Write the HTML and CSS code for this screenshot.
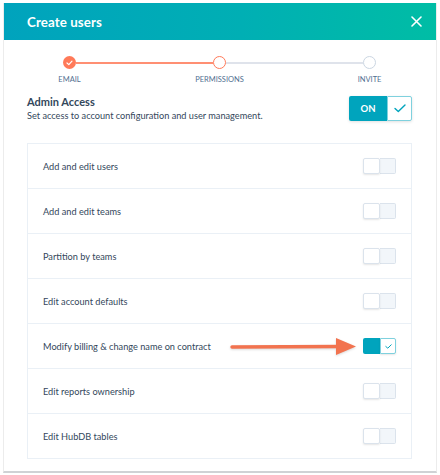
FILE: index.html
```html
<!DOCTYPE html>
<html>
<head>
<meta charset="utf-8">
<link rel="stylesheet" href="styles.css">
</head>
<body>
<div class="modal">
  <div class="header">
    <span class="title">Create users</span>
    <svg class="close" width="11" height="11" viewBox="0 0 11 11"><path d="M1 1 L10 10 M10 1 L1 10" stroke="#fff" stroke-width="1.6" stroke-linecap="round"/></svg>
  </div>
  <div class="content">
    <div class="steps">
      <div class="step">
        <span class="dot done"><svg width="7" height="6" viewBox="0 0 7 6"><path d="M1 3 L2.8 4.6 L6 1.2" fill="none" stroke="#fff" stroke-width="1.2" stroke-linecap="round" stroke-linejoin="round"/></svg></span>
        <span class="label">EMAIL</span>
      </div>
      <div class="line active"></div>
      <div class="step">
        <span class="dot current"></span>
        <span class="label">PERMISSIONS</span>
      </div>
      <div class="line"></div>
      <div class="step">
        <span class="dot todo"></span>
        <span class="label">INVITE</span>
      </div>
    </div>

    <div class="admin">
      <div class="admin-text">
        <div class="admin-title">Admin Access</div>
        <div class="admin-sub">Set access to account configuration and user management.</div>
      </div>
      <div class="on-toggle">
        <span class="on-label">ON</span>
        <span class="on-check"><svg width="12" height="9" viewBox="0 0 12 9"><path d="M1 4.5 L4.3 7.6 L11 1" fill="none" stroke="#00a4bd" stroke-width="1.4" stroke-linecap="round" stroke-linejoin="round"/></svg></span>
      </div>
    </div>

    <div class="table">
      <div class="row"><span>Add and edit users</span><span class="sw"><span class="knob"></span><span class="track"></span></span></div>
      <div class="row"><span>Add and edit teams</span><span class="sw"><span class="knob"></span><span class="track"></span></span></div>
      <div class="row"><span>Partition by teams</span><span class="sw"><span class="knob"></span><span class="track"></span></span></div>
      <div class="row"><span>Edit account defaults</span><span class="sw"><span class="knob"></span><span class="track"></span></span></div>
      <div class="row highlight"><span>Modify billing &amp; change name on contract</span>
        <svg class="arrow" width="130" height="22" viewBox="0 0 130 22"><path d="M2 11 L110 10.5" stroke="#f2734f" stroke-width="3.4" stroke-linecap="round"/><path d="M106 2 L126 10.5 L106 19 Z" fill="#f2734f"/></svg>
        <span class="sw on"><span class="track-on"></span><span class="knob-on"><svg width="7" height="5" viewBox="0 0 7 5"><path d="M0.8 2.5 L2.8 4.2 L6.2 0.8" fill="none" stroke="#00a4bd" stroke-width="1" stroke-linecap="round" stroke-linejoin="round"/></svg></span></span></div>
      <div class="row"><span>Edit reports ownership</span><span class="sw"><span class="knob"></span><span class="track"></span></span></div>
      <div class="row"><span>Edit HubDB tables</span><span class="sw"><span class="knob"></span><span class="track"></span></span></div>
    </div>
  </div>
</div>
</body>
</html>
```

FILE: styles.css
```css
html, body {
  margin: 0;
  padding: 0;
  background: #fff;
}
body {
  font-family: "Lato", "Open Sans", sans-serif;
  color: #33475b;
  width: 440px;
  height: 475px;
  overflow: hidden;
}
.modal {
  margin: 3px 3px 0 3px;
  height: 470px;
  border-left: 1px solid #ececec;
  border-right: 1px solid #ececec;
  border-bottom: 2px solid #cfd2d5;
  box-sizing: border-box;
  background: #fff;
}
.header {
  height: 37px;
  background: linear-gradient(90deg, #00a3bd 0%, #00afb4 55%, #00bda5 100%);
  display: flex;
  align-items: center;
  justify-content: space-between;
  padding: 0 14px 0 23px;
}
.title {
  color: #fff;
  font-weight: 700;
  font-size: 13.3px;
  letter-spacing: 0.1px;
}
.close {
  display: block;
}
.content {
  padding: 0 24px 0 23px;
}
.steps {
  display: flex;
  align-items: flex-start;
  margin: 16px 36px 0 36px;
}
.step {
  width: 13px;
  display: flex;
  flex-direction: column;
  align-items: center;
}
.dot {
  width: 13px;
  height: 13px;
  border-radius: 50%;
  box-sizing: border-box;
  display: flex;
  align-items: center;
  justify-content: center;
  background: #fff;
}
.dot.done {
  background: #ff7a59;
}
.dot.current {
  border: 1.6px solid #ff7a59;
}
.dot.todo {
  border: 1.6px solid #cbd6e2;
}
.label {
  margin-top: 6px;
  font-size: 7.5px;
  line-height: 10px;
  color: #516f90;
  white-space: nowrap;
}
.line {
  flex: 1;
  height: 2px;
  margin-top: 5.5px;
  background: #dfe3eb;
}
.line.active {
  background: #ff8f73;
}
.admin {
  margin-top: 10px;
  display: flex;
  align-items: center;
  justify-content: space-between;
}
.admin-title {
  font-weight: 700;
  font-size: 11px;
  line-height: 14px;
  color: #33475b;
}
.admin-sub {
  font-size: 9.2px;
  line-height: 13px;
  color: #33475b;
}
.on-toggle {
  display: flex;
  height: 25px;
  box-shadow: 0 1px 3px rgba(0, 0, 0, 0.12);
  border-radius: 2px;
}
.on-label {
  width: 38px;
  background: #00a4bd;
  color: #fff;
  font-weight: 700;
  font-size: 9.5px;
  display: flex;
  align-items: center;
  justify-content: center;
  border-radius: 2px 0 0 2px;
}
.on-check {
  width: 25px;
  box-sizing: border-box;
  border: 1px solid #7fd1de;
  border-radius: 0 2px 2px 0;
  background: #fff;
  display: flex;
  align-items: center;
  justify-content: center;
}
.table {
  margin-top: 21px;
  border: 1px solid #eaf0f6;
}
.row {
  position: relative;
  height: 44px;
  display: flex;
  align-items: center;
  justify-content: space-between;
  padding: 0 15px 0 15px;
  font-size: 9.2px;
  color: #33475b;
  border-bottom: 1px solid #eaf0f6;
}
.row:last-child {
  border-bottom: none;
}
.sw {
  display: flex;
  width: 33px;
  height: 16px;
}
.knob {
  width: 17px;
  height: 16px;
  box-sizing: border-box;
  background: #fff;
  border: 1px solid #dbe3ec;
  border-radius: 2px;
  box-shadow: 0 1px 2px rgba(0, 0, 0, 0.1);
  position: relative;
  z-index: 1;
}
.track {
  flex: 1;
  height: 16px;
  box-sizing: border-box;
  background: #f2f6fa;
  border: 1px solid #dbe3ec;
  border-left: none;
  border-radius: 0 2px 2px 0;
}
.track-on {
  width: 17px;
  height: 16px;
  background: #00a4bd;
  border-radius: 2px 0 0 2px;
}
.knob-on {
  flex: 1;
  height: 16px;
  box-sizing: border-box;
  background: #fff;
  border: 1px solid #7fd1de;
  border-radius: 0 2px 2px 0;
  box-shadow: 0 1px 2px rgba(0, 0, 0, 0.1);
  display: flex;
  align-items: center;
  justify-content: center;
}
.arrow {
  position: absolute;
  left: 202px;
  top: 12px;
  filter: drop-shadow(0 1px 1px rgba(0, 0, 0, 0.15));
}
```
